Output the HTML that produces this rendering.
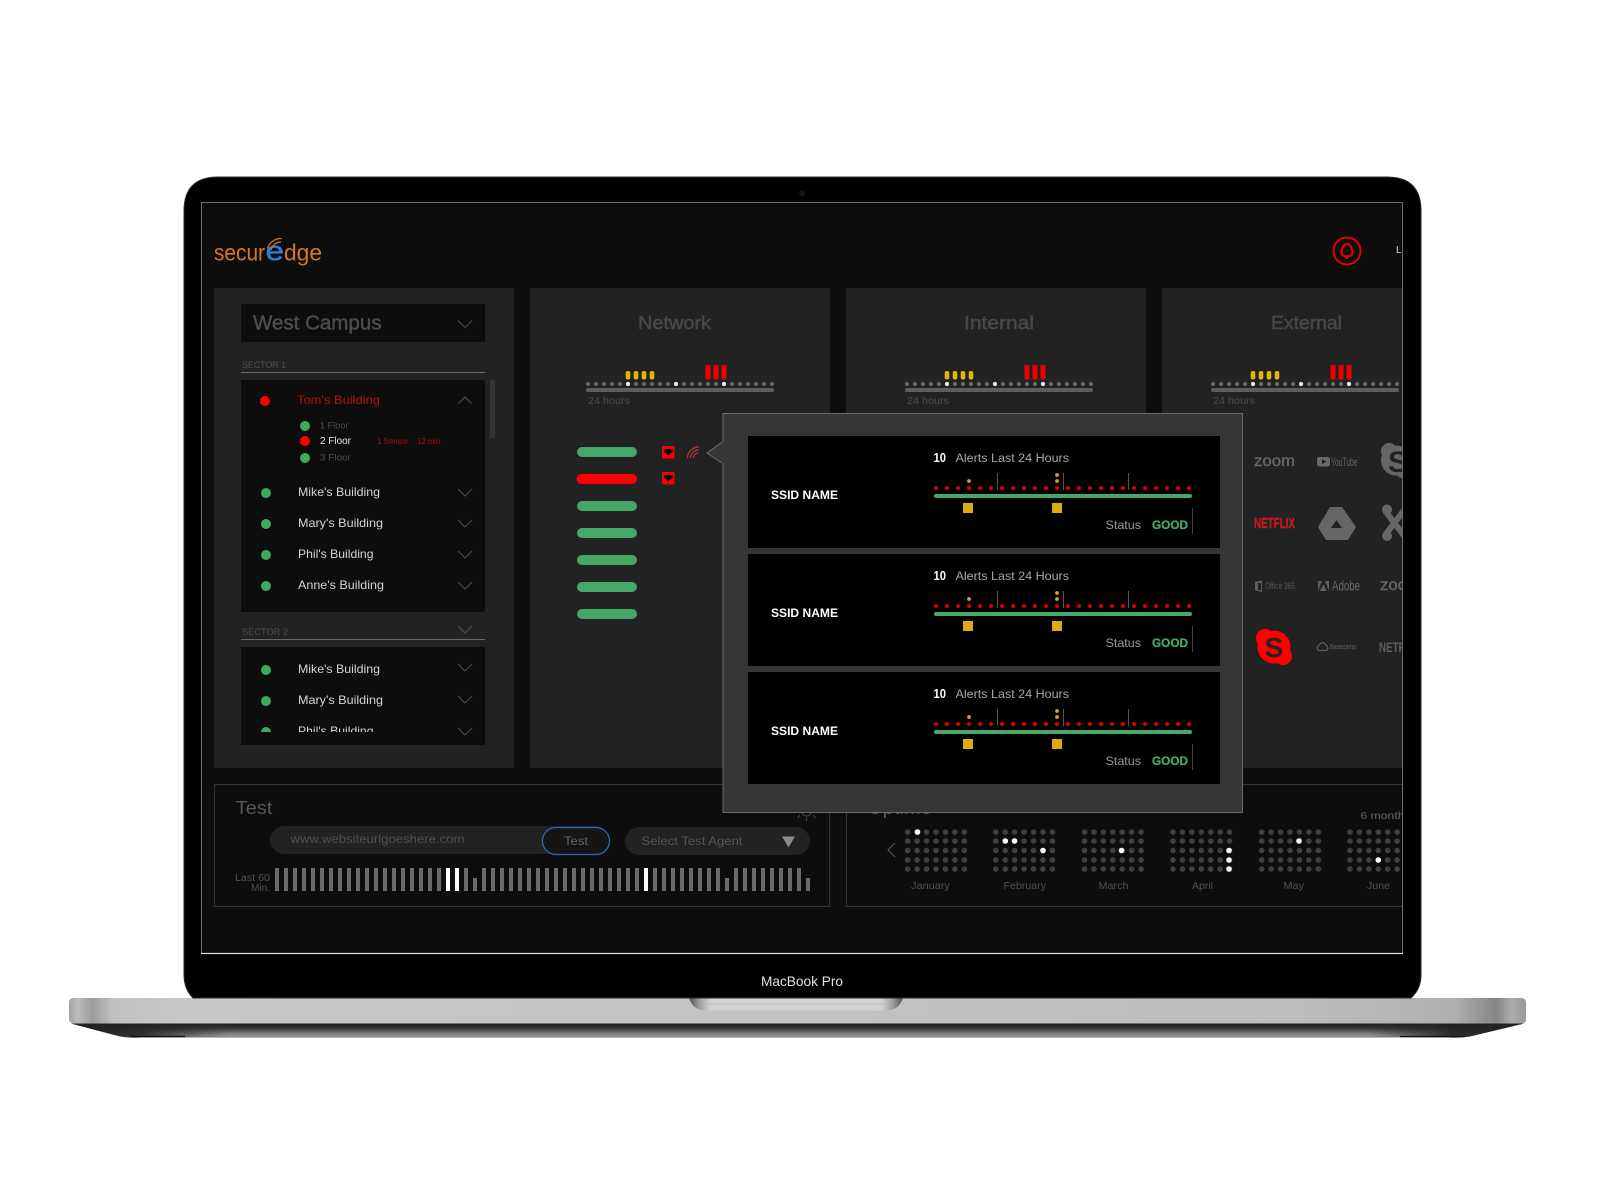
<!DOCTYPE html>
<html lang="en"><head><meta charset="utf-8"><title>Securedge dashboard on MacBook Pro</title>
<style>
html,body{margin:0;padding:0;background:#fff;width:1600px;height:1200px;overflow:hidden}
svg{display:block;filter:blur(.3px)}
text{font-family:"Liberation Sans",Arial,sans-serif;white-space:pre}
.m{stroke:currentColor;stroke-width:.45}
</style></head><body>
<svg xmlns="http://www.w3.org/2000/svg" width="1600" height="1200" viewBox="0 0 1600 1200">
<defs>
<clipPath id="scr"><rect x="201" y="202" width="1202" height="751"/></clipPath>
<clipPath id="lst"><rect x="241" y="647" width="244" height="85"/></clipPath>
<linearGradient id="base" gradientUnits="userSpaceOnUse" x1="69" y1="0" x2="1526" y2="0">
<stop offset="0" stop-color="#a5a5a5"/><stop offset=".006" stop-color="#bdbdbd"/><stop offset=".016" stop-color="#9c9c9c"/><stop offset=".03" stop-color="#c0c0c0"/><stop offset=".08" stop-color="#c8c8c8"/><stop offset=".85" stop-color="#bdbdbd"/><stop offset=".95" stop-color="#b0b0b0"/><stop offset=".98" stop-color="#858585"/><stop offset=".99" stop-color="#adadad"/><stop offset="1" stop-color="#999"/></linearGradient>
<linearGradient id="wedge" x1="0" y1="0" x2="0" y2="1"><stop offset="0" stop-color="#1c1c1c"/><stop offset=".35" stop-color="#3a3a3a"/><stop offset=".8" stop-color="#8c8c8c"/><stop offset="1" stop-color="#a8a8a8"/></linearGradient>
<linearGradient id="wside" gradientUnits="userSpaceOnUse" x1="69" y1="0" x2="1526" y2="0"><stop offset="0" stop-color="#222"/><stop offset=".05" stop-color="#222" stop-opacity=".85"/><stop offset=".11" stop-color="#222" stop-opacity="0"/><stop offset=".89" stop-color="#222" stop-opacity="0"/><stop offset=".95" stop-color="#222" stop-opacity=".9"/><stop offset="1" stop-color="#222"/></linearGradient>
<linearGradient id="notch" gradientUnits="userSpaceOnUse" x1="689" y1="0" x2="903" y2="0"><stop offset="0" stop-color="#4e4e4e"/><stop offset=".05" stop-color="#a0a0a0"/><stop offset=".1" stop-color="#d2d2d2"/><stop offset=".9" stop-color="#d2d2d2"/><stop offset=".95" stop-color="#a0a0a0"/><stop offset="1" stop-color="#4e4e4e"/></linearGradient>
<g id="tl">
<line x1="588" y1="384" x2="772.5" y2="384" stroke="#6a6a6a" stroke-width="4" stroke-linecap="round" stroke-dasharray="0 8"/>
<circle cx="628" cy="384" r="2.1" fill="#eee"/><circle cx="676" cy="384" r="2.1" fill="#eee"/><circle cx="724" cy="384" r="2.1" fill="#eee"/>
<rect x="586" y="388" width="188" height="4" rx="2" fill="#5e5e5e"/>
<g fill="#e6b012"><rect x="625.700" y="371" width="4.600" height="8.500" rx="2"/><rect x="633.700" y="371" width="4.600" height="8.500" rx="2"/><rect x="641.700" y="371" width="4.600" height="8.500" rx="2"/><rect x="649.700" y="371" width="4.600" height="8.500" rx="2"/></g>
<g fill="#ee0000"><rect x="705.500" y="365" width="5" height="14.500" rx="1"/><rect x="713.500" y="365" width="5" height="14.500" rx="1"/><rect x="721.500" y="365" width="5" height="14.500" rx="1"/></g>
</g>
<g id="rowshapes">
<rect x="748" y="436" width="472" height="112" fill="#000"/>
<g stroke="#555" stroke-width="1"><line x1="997.500" y1="473" x2="997.500" y2="490"/><line x1="1063.500" y1="473" x2="1063.500" y2="490"/><line x1="1128.500" y1="473" x2="1128.500" y2="490"/></g>
<line x1="936" y1="488" x2="1189.500" y2="488" stroke="#d80000" stroke-width="4" stroke-linecap="round" stroke-dasharray="0 11"/>
<circle cx="969" cy="481" r="1.900" fill="#d8a520"/><circle cx="1057" cy="481" r="1.900" fill="#d8a520"/><circle cx="1057" cy="475" r="1.900" fill="#d8a520"/>
<rect x="934" y="494" width="258" height="4" rx="2" fill="#45a866"/>
<rect x="963" y="503" width="10" height="10" fill="#e0aa0f"/><rect x="1052" y="503" width="10" height="10" fill="#e0aa0f"/>
<line x1="1192.500" y1="508" x2="1192.500" y2="534" stroke="#444"/>
</g>
<g id="mon" stroke="#404040" stroke-width="5.600" stroke-linecap="round" stroke-dasharray="0 9.430">
<line x1="0" y1="832" x2="57" y2="832"/><line x1="0" y1="841" x2="57" y2="841"/><line x1="0" y1="850.500" x2="57" y2="850.500"/><line x1="0" y1="860" x2="57" y2="860"/><line x1="0" y1="869" x2="57" y2="869"/>
</g>
<path id="chev" d="M-7 -3.500L0 3.500L7 -3.500" fill="none" stroke="#4e4e4e" stroke-width="1"/>
</defs>

<rect width="1600" height="1200" fill="#fff"/>

<!-- base -->
<path d="M71 1023.500H1524L1472 1036Q1463 1038 1450 1037.500H140Q126 1038 118 1036Z" fill="url(#wedge)"/>
<path d="M71 1023.500H1524L1472 1036Q1463 1038 1450 1037.500H140Q126 1038 118 1036Z" fill="url(#wside)"/>
<path d="M130 1036.500H185M1400 1036.500H1465" stroke="#111" stroke-width="1.200" fill="none"/>
<path d="M185 1037H1400" stroke="#777" stroke-width="1" fill="none"/>
<path d="M73 998H1521Q1526 998 1526 1003V1019Q1526 1023.500 1521 1023.500H74Q69 1023 69 1019V1003Q69 998 73 998Z" fill="url(#base)"/>
<path d="M689 998H903Q899 1010 887 1010.500H705Q693 1010 689 998Z" fill="url(#notch)"/>
<path d="M705 1004H887" stroke="#bdbdbd" stroke-width="1"/>

<!-- lid -->
<path d="M184 211Q184 177 218 177H1387Q1421 177 1421 211V975Q1421 989 1411 998H193Q184 989 184 975Z" fill="#000" stroke="#2e2e2e" stroke-width="1"/>
<circle cx="802" cy="193" r="3" fill="#141414"/>
<text x="761" y="986" font-size="14" fill="#e2e2e2" textLength="82" lengthAdjust="spacingAndGlyphs">MacBook Pro</text>

<!-- screen -->
<rect x="201" y="202" width="1202" height="751" fill="#0d0d0d"/>
<g clip-path="url(#scr)">
<!-- header -->
<text x="214" y="260.500" font-size="23" fill="#d9771f" textLength="51" lengthAdjust="spacingAndGlyphs">secur</text>
<text x="265.500" y="260" font-size="27" fill="#2f7ad1" textLength="18.500" lengthAdjust="spacingAndGlyphs" stroke="#2f7ad1" stroke-width=".5">e</text>
<text x="284" y="260.500" font-size="23" fill="#d9771f" textLength="38" lengthAdjust="spacingAndGlyphs">dge</text>
<g fill="none" stroke="#d9771f" stroke-width="1.300"><path d="M271 250A10.500 10.500 0 0 1 281 242"/><path d="M267.500 248.500A14 14 0 0 1 281.500 238.500"/></g>
<circle cx="1347" cy="251" r="13.500" fill="none" stroke="#e00000" stroke-width="2"/>
<path d="M1347 244C1350.500 244 1352 249 1352.500 252.500C1352.800 255 1350 256.500 1347 256.500C1344 256.500 1341.200 255 1341.500 252.500C1342 249 1343.500 244 1347 244Z" fill="none" stroke="#e00000" stroke-width="2.200"/>
<circle cx="1347" cy="257.500" r="1.500" fill="#e00000"/>
<text x="1396" y="253" font-size="10" fill="#ddd">Logout</text>

<!-- panels -->
<rect x="214" y="288" width="300" height="480" fill="#222"/>
<rect x="530" y="288" width="300" height="480" fill="#222"/>
<rect x="846" y="288" width="300" height="480" fill="#222"/>
<rect x="1162" y="288" width="260" height="480" fill="#222"/>

<!-- sidebar -->
<rect x="241" y="304" width="244" height="38" fill="#0d0d0d"/>
<text class="m" x="253" y="329.500" font-size="20" color="#4c4c4c" fill="#4c4c4c" textLength="128.500" lengthAdjust="spacingAndGlyphs">West Campus</text>
<use href="#chev" x="465" y="324"/>
<text x="242" y="368" font-size="9.500" fill="#4e4e4e" textLength="44" lengthAdjust="spacingAndGlyphs">SECTOR 1</text>
<line x1="241" y1="372.500" x2="485" y2="372.500" stroke="#6a6a6a"/>
<rect x="241" y="380" width="244" height="232" fill="#0d0d0d"/>
<rect x="490" y="380" width="5" height="58" fill="#343434"/>

<circle cx="265" cy="401" r="5" fill="#ff0000"/>
<text x="297" y="404" font-size="12" fill="#b31212" textLength="83" lengthAdjust="spacingAndGlyphs">Tom's Building</text>
<path d="M458.500 403.500L465 397L471.500 403.500" fill="none" stroke="#4e4e4e"/>
<circle cx="305" cy="426" r="5" fill="#3fa862"/>
<text x="320" y="428.500" font-size="9.500" fill="#4e4e4e" textLength="28.500" lengthAdjust="spacingAndGlyphs">1 Floor</text>
<circle cx="305" cy="441" r="5" fill="#ff0000"/>
<text x="320" y="444" font-size="10" fill="#e5e5e5" textLength="31" lengthAdjust="spacingAndGlyphs">2 Floor</text>
<text x="377" y="444" font-size="8" fill="#a81010" textLength="31.500" lengthAdjust="spacingAndGlyphs">1 Sensor</text>
<text x="417" y="444" font-size="8" fill="#a81010" textLength="25.500" lengthAdjust="spacingAndGlyphs">12 min.</text>
<circle cx="305" cy="458" r="5" fill="#3fa862"/>
<text x="320" y="460.500" font-size="9.500" fill="#4e4e4e" textLength="31" lengthAdjust="spacingAndGlyphs">3 Floor</text>

<g fill="#3fa862"><circle cx="266" cy="493" r="5"/><circle cx="266" cy="524" r="5"/><circle cx="266" cy="555" r="5"/><circle cx="266" cy="586" r="5"/></g>
<g font-size="12" fill="#d5d5d5">
<text x="298" y="496" textLength="82" lengthAdjust="spacingAndGlyphs">Mike's Building</text>
<text x="298" y="527" textLength="85" lengthAdjust="spacingAndGlyphs">Mary's Building</text>
<text x="298" y="558" textLength="75.500" lengthAdjust="spacingAndGlyphs">Phil's Building</text>
<text x="298" y="589" textLength="86" lengthAdjust="spacingAndGlyphs">Anne's Building</text>
</g>
<use href="#chev" x="465" y="492.500"/><use href="#chev" x="465" y="523.500"/><use href="#chev" x="465" y="554.500"/><use href="#chev" x="465" y="585.500"/>

<text x="242" y="635" font-size="9.500" fill="#4e4e4e" textLength="46" lengthAdjust="spacingAndGlyphs">SECTOR 2</text>
<use href="#chev" x="465" y="629.500"/>
<line x1="241" y1="639.500" x2="485" y2="639.500" stroke="#6a6a6a"/>
<rect x="241" y="647" width="244" height="98" fill="#0d0d0d"/>
<g clip-path="url(#lst)">
<g fill="#3fa862"><circle cx="266" cy="670" r="5"/><circle cx="266" cy="701" r="5"/><circle cx="266" cy="732" r="5"/></g>
<g font-size="12" fill="#d5d5d5">
<text x="298" y="673" textLength="82" lengthAdjust="spacingAndGlyphs">Mike's Building</text>
<text x="298" y="704" textLength="85" lengthAdjust="spacingAndGlyphs">Mary's Building</text>
<text x="298" y="735" textLength="75.500" lengthAdjust="spacingAndGlyphs">Phil's Building</text>
</g></g>
<use href="#chev" x="465" y="667.500"/><use href="#chev" x="465" y="699.500"/><use href="#chev" x="465" y="731.500"/>

<!-- column titles + timelines -->
<text class="m" x="638" y="329" font-size="18" color="#484848" fill="#484848" textLength="73" lengthAdjust="spacingAndGlyphs">Network</text>
<text class="m" x="964" y="329" font-size="18" color="#484848" fill="#484848" textLength="70" lengthAdjust="spacingAndGlyphs">Internal</text>
<text class="m" x="1271" y="329" font-size="18" color="#484848" fill="#484848" textLength="71" lengthAdjust="spacingAndGlyphs">External</text>
<use href="#tl"/><use href="#tl" x="319"/><use href="#tl" x="625"/>
<text x="588" y="404" font-size="10.500" fill="#4c4c4c" textLength="42" lengthAdjust="spacingAndGlyphs">24 hours</text>
<text x="907" y="404" font-size="10.500" fill="#4c4c4c" textLength="42" lengthAdjust="spacingAndGlyphs">24 hours</text>
<text x="1213" y="404" font-size="10.500" fill="#4c4c4c" textLength="42" lengthAdjust="spacingAndGlyphs">24 hours</text>

<!-- network rows -->
<g fill="#45a866"><rect x="577" y="447" width="60" height="10" rx="5"/><rect x="577" y="501" width="60" height="10" rx="5"/><rect x="577" y="528" width="60" height="10" rx="5"/><rect x="577" y="555" width="60" height="10" rx="5"/><rect x="577" y="582" width="60" height="10" rx="5"/><rect x="577" y="609" width="60" height="10" rx="5"/></g>
<rect x="576.500" y="474" width="60.500" height="10" rx="5" fill="#ff0000"/>
<rect x="662" y="446" width="12.500" height="12.500" rx="1" fill="#f40000"/><path d="M664 449H672.500V452.500H670.500V453.700H669.500V455H667V453.700H666V452.500H664Z" fill="#000"/>
<rect x="662" y="472" width="12.500" height="12.500" rx="1" fill="#f40000"/><path d="M664 475H672.500V478.500H670.500V479.700H669.500V481H667V479.700H666V478.500H664Z" fill="#000"/>
<g fill="none" stroke="#a83232" stroke-width="1.400"><path d="M687.500 458A11 11 0 0 1 698.500 447"/><path d="M690.500 458A8 8 0 0 1 698.500 450"/><path d="M693.500 458A5 5 0 0 1 698.500 453"/></g>

<!-- app logos -->
<text x="1254" y="466" font-size="16" fill="#666" stroke="#666" stroke-width=".4" textLength="41" lengthAdjust="spacingAndGlyphs">zoom</text>
<rect x="1317" y="457" width="13" height="9.500" rx="2.500" fill="#6a6a6a"/><path d="M1322 459.300L1326.500 461.700L1322 464.100Z" fill="#222"/>
<text x="1331" y="466" font-size="12" fill="#666" textLength="26.500" lengthAdjust="spacingAndGlyphs">YouTube</text>
<g fill="#666"><circle cx="1389" cy="451" r="8"/><circle cx="1403" cy="470" r="8"/><circle cx="1396" cy="460.500" r="15"/></g>
<text x="1388" y="472" font-size="30" font-weight="700" fill="#222">S</text>
<text x="1254" y="528" font-size="15" font-weight="700" fill="#c41a1a" stroke="#c41a1a" stroke-width=".4" textLength="41" lengthAdjust="spacingAndGlyphs">NETFLIX</text>
<path d="M1318 527L1330 507H1342L1356 527L1348 540H1326Z" fill="#666"/><path d="M1336.500 520L1331 528H1342Z" fill="#222"/>
<g stroke="#666" stroke-width="6" fill="none" stroke-linecap="round"><path d="M1386 512L1405 537"/><path d="M1386 534L1405 509"/></g><circle cx="1387" cy="509.500" r="5" fill="#666"/><circle cx="1387" cy="536" r="5" fill="#666"/>
<path d="M1255 582L1262 580.500V592L1255 590.500Z" fill="#5e5e5e"/>
<path d="M1258 583H1261V590H1258Z" fill="#222"/>
<text x="1265" y="589" font-size="9" fill="#555" textLength="30" lengthAdjust="spacingAndGlyphs">Office 365</text>
<path d="M1318 581H1322L1318 591ZM1325 581H1329V591ZM1323.500 584.500L1326.500 591H1320Z" fill="#606060"/>
<text x="1332" y="590.500" font-size="14" fill="#666" textLength="28" lengthAdjust="spacingAndGlyphs">Adobe</text>
<text x="1380" y="590" font-size="16" fill="#666" stroke="#666" stroke-width=".4" textLength="41" lengthAdjust="spacingAndGlyphs">zoom</text>
<g fill="#ff0000"><circle cx="1265" cy="638" r="9"/><circle cx="1283" cy="656" r="9"/><circle cx="1274" cy="647" r="16.500"/></g>
<text x="1274" y="657" font-size="28" font-weight="700" fill="#2a2020" text-anchor="middle">S</text>
<path d="M1319 650.500C1316.500 650 1316.500 646 1319 645.500C1320 642 1325 642 1326 645.500C1328.500 646 1328.500 650 1326 650.500Z" fill="none" stroke="#666" stroke-width="1"/>
<text x="1330" y="649" font-size="7.500" fill="#606060" textLength="26" lengthAdjust="spacingAndGlyphs">Basecamp</text>
<text x="1379" y="652" font-size="14" font-weight="700" fill="#5e5e5e" textLength="41" lengthAdjust="spacingAndGlyphs">NETFLIX</text>

<!-- test panel -->
<rect x="214.500" y="784.500" width="615" height="122" fill="none" stroke="#343434"/>
<text x="235.500" y="814" font-size="18" fill="#585858" textLength="37" lengthAdjust="spacingAndGlyphs">Test</text>
<rect x="270" y="826" width="339" height="28" rx="14" fill="#222"/>
<text x="290.500" y="843" font-size="12" fill="#505050" textLength="174" lengthAdjust="spacingAndGlyphs">www.websiteurlgoeshere.com</text>
<rect x="542.500" y="827.500" width="67" height="27" rx="13.500" fill="#151515" stroke="#2a6ab0" stroke-width="1.300"/>
<text x="564" y="845" font-size="12" fill="#666" textLength="24" lengthAdjust="spacingAndGlyphs">Test</text>
<rect x="625" y="827" width="185" height="28" rx="14" fill="#222"/>
<text x="641.500" y="845" font-size="12" fill="#555" textLength="101" lengthAdjust="spacingAndGlyphs">Select Test Agent</text>
<path d="M782 836.500H795L788.500 847.500Z" fill="#8a8a8a"/>
<g stroke="#444" fill="none"><circle cx="806.500" cy="811" r="5"/><path d="M806.500 817.500V821M800 815L797.500 818M813 815L815.500 818"/></g>
<text x="270" y="881" font-size="10" fill="#505050" text-anchor="end" textLength="35" lengthAdjust="spacingAndGlyphs">Last 60</text>
<text x="270" y="891" font-size="10" fill="#505050" text-anchor="end" textLength="19" lengthAdjust="spacingAndGlyphs">Min.</text>
<line x1="275" y1="879.500" x2="810" y2="879.500" stroke="#6c6c6c" stroke-width="23" stroke-dasharray="4 5"/>
<g fill="#0d0d0d"><rect x="473" y="868" width="4.500" height="10"/><rect x="725" y="868" width="4.500" height="10"/><rect x="806" y="868" width="4.500" height="10"/></g>
<g fill="#fff"><rect x="446" y="868" width="4" height="23"/><rect x="455" y="868" width="4" height="23"/><rect x="644" y="868" width="4" height="23"/></g>

<!-- uptime panel -->
<rect x="846.500" y="784.500" width="600" height="122" fill="none" stroke="#343434"/>
<text x="868" y="814" font-size="18" fill="#585858" textLength="64" lengthAdjust="spacingAndGlyphs">Uptime</text>
<text x="1360.500" y="819" font-size="10.500" fill="#666" textLength="44" lengthAdjust="spacingAndGlyphs">6 month</text>
<path d="M895 843L888 850L895 857" fill="none" stroke="#5a5a5a"/>
<use href="#mon" x="907.700"/><use href="#mon" x="995.800"/><use href="#mon" x="1084.500"/><use href="#mon" x="1173"/><use href="#mon" x="1261.700"/><use href="#mon" x="1350"/>
<g fill="#fff"><circle cx="917.500" cy="832" r="2.800"/><circle cx="1005.300" cy="841" r="2.800"/><circle cx="1014.500" cy="841" r="2.800"/><circle cx="1043" cy="850.500" r="2.800"/><circle cx="1121.500" cy="850.500" r="2.800"/><circle cx="1229" cy="850.500" r="2.800"/><circle cx="1229" cy="860" r="2.800"/><circle cx="1229" cy="869" r="2.800"/><circle cx="1299" cy="841" r="2.800"/><circle cx="1378.300" cy="860" r="2.800"/></g>
<g font-size="10.500" fill="#505050">
<text x="911" y="889" textLength="39" lengthAdjust="spacingAndGlyphs">January</text>
<text x="1003.500" y="889" textLength="42.500" lengthAdjust="spacingAndGlyphs">February</text>
<text x="1098.500" y="889" textLength="30" lengthAdjust="spacingAndGlyphs">March</text>
<text x="1192" y="889" textLength="21" lengthAdjust="spacingAndGlyphs">April</text>
<text x="1283.500" y="889" textLength="20.500" lengthAdjust="spacingAndGlyphs">May</text>
<text x="1367" y="889" textLength="23" lengthAdjust="spacingAndGlyphs">June</text>
</g>

<!-- popup -->
<rect x="723" y="413.500" width="519.500" height="399" fill="#363636" stroke="#6c6c6c"/>
<path d="M723.500 441L707 453L723.500 464" fill="#363636" stroke="#6c6c6c"/>
<rect x="722" y="441.500" width="3" height="22" fill="#363636"/>

<use href="#rowshapes"/>
<text x="771" y="499" font-size="11.500" font-weight="700" fill="#fff" textLength="67" lengthAdjust="spacingAndGlyphs">SSID NAME</text>
<text x="933.500" y="462" font-size="12.500" font-weight="700" fill="#fff" textLength="12.500" lengthAdjust="spacingAndGlyphs">10</text>
<text x="955.500" y="462" font-size="12" fill="#a8a8a8" textLength="113.500" lengthAdjust="spacingAndGlyphs">Alerts Last 24 Hours</text>
<text x="1105.500" y="529" font-size="12" fill="#999" textLength="35.500" lengthAdjust="spacingAndGlyphs">Status</text>
<text x="1152" y="529" font-size="12" font-weight="700" fill="#45a866" stroke="#45a866" stroke-width=".3" textLength="36" lengthAdjust="spacingAndGlyphs">GOOD</text>

<use href="#rowshapes" y="118"/>
<text x="771" y="617" font-size="11.500" font-weight="700" fill="#fff" textLength="67" lengthAdjust="spacingAndGlyphs">SSID NAME</text>
<text x="933.500" y="580" font-size="12.500" font-weight="700" fill="#fff" textLength="12.500" lengthAdjust="spacingAndGlyphs">10</text>
<text x="955.500" y="580" font-size="12" fill="#a8a8a8" textLength="113.500" lengthAdjust="spacingAndGlyphs">Alerts Last 24 Hours</text>
<text x="1105.500" y="647" font-size="12" fill="#999" textLength="35.500" lengthAdjust="spacingAndGlyphs">Status</text>
<text x="1152" y="647" font-size="12" font-weight="700" fill="#45a866" stroke="#45a866" stroke-width=".3" textLength="36" lengthAdjust="spacingAndGlyphs">GOOD</text>

<use href="#rowshapes" y="236"/>
<text x="771" y="735" font-size="11.500" font-weight="700" fill="#fff" textLength="67" lengthAdjust="spacingAndGlyphs">SSID NAME</text>
<text x="933.500" y="698" font-size="12.500" font-weight="700" fill="#fff" textLength="12.500" lengthAdjust="spacingAndGlyphs">10</text>
<text x="955.500" y="698" font-size="12" fill="#a8a8a8" textLength="113.500" lengthAdjust="spacingAndGlyphs">Alerts Last 24 Hours</text>
<text x="1105.500" y="765" font-size="12" fill="#999" textLength="35.500" lengthAdjust="spacingAndGlyphs">Status</text>
<text x="1152" y="765" font-size="12" font-weight="700" fill="#45a866" stroke="#45a866" stroke-width=".3" textLength="36" lengthAdjust="spacingAndGlyphs">GOOD</text>
</g>
<!-- screen edge -->
<path d="M201.500 953V202.500H1402.500V953" fill="none" stroke="#6e6e6e" stroke-width="1"/>
<line x1="201" y1="953.500" x2="1403" y2="953.500" stroke="#dcdcdc" stroke-width="1.200"/>
</svg>
</body></html>
